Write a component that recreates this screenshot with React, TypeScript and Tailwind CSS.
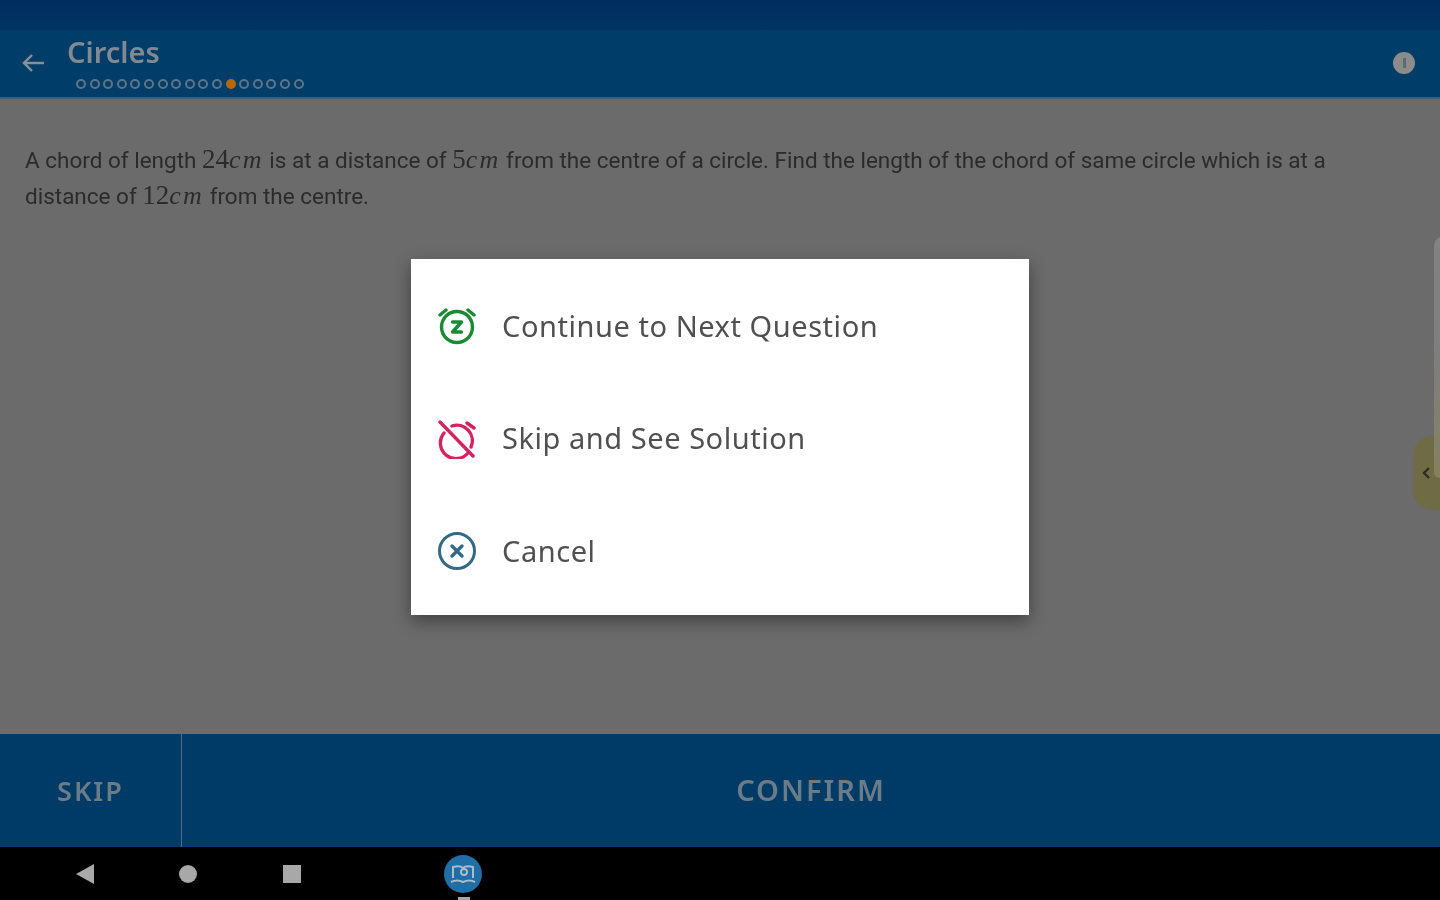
import React from "react";

const dots = Array.from({ length: 17 }, (_, i) => i);

function M({ n, u = "cm" }: { n: string; u?: string }) {
  return (
    <span className="font-['Liberation_Serif',serif] text-[27px] leading-none">
      {n}
      <i className="text-[26px] leading-none tracking-[2.2px]">{u}</i>
    </span>
  );
}

function Row({ icon, label }: { icon: React.ReactNode; label: string }) {
  return (
    <div className="flex h-[112.5px] items-center pl-[26px]">
      <div className="h-[40px] w-[40px] shrink-0 blur-[0.5px]">{icon}</div>
      <span className="ml-[25px] mb-[2px] text-[29px] leading-none tracking-[0.55px] text-[#505050] blur-[0.5px]">{label}</span>
    </div>
  );
}

const Snooze = (
  <svg viewBox="0 0 40 40" className="h-full w-full" fill="none" stroke="#1c8a34" strokeWidth="3.4" strokeLinecap="round" strokeLinejoin="round">
    <circle cx="20" cy="21" r="15.5" />
    <path d="M3 9 9 4M37 9 31 4" />
    <path d="M15.5 16h9l-9 10h9" />
  </svg>
);
const AlarmOff = (
  <svg viewBox="0 0 40 40" className="h-full w-full" fill="none" stroke="#d4245f" strokeWidth="3.4" strokeLinecap="round" strokeLinejoin="round">
    <path d="M7 14a15.5 15.5 0 0 0 24 20M15 7A15.5 15.5 0 0 1 34 28" />
    <path d="M30 4l7 5" />
    <path d="M3 3 36 37" />
  </svg>
);
const CloseCircle = (
  <svg viewBox="0 0 40 40" className="h-full w-full" fill="none" stroke="#346a85" strokeWidth="3" strokeLinecap="round">
    <circle cx="20" cy="20" r="17.5" />
    <path d="M15 15l10 10M25 15l-10 10" strokeWidth="3.4" />
  </svg>
);

export default function App() {
  return (
    <div className="relative flex h-[900px] w-[1440px] flex-col overflow-hidden bg-[#6b6b6b] font-['Noto_Sans',sans-serif]">
      <div className="h-[30px] bg-gradient-to-b from-[#012d60] to-[#013463]" />
      <header className="flex h-[69px] items-start border-b-2 border-[#3f5f75] bg-[#003d69]">
        <svg viewBox="0 0 24 24" className="ml-[21px] mt-[21px] h-[24px] w-[24px] blur-[0.5px]" fill="none" stroke="#8a8f95" strokeWidth="2.4">
          <path d="M23 12H2M11 4l-8 8 8 8" />
        </svg>
        <div className="ml-[22px] flex flex-col">
          <span className="mt-[3px] text-[29px] leading-[38px] font-semibold text-[#7f8a93] blur-[0.6px]">Circles</span>
          <div className="ml-[9px] mt-[8px] flex gap-[3.6px] blur-[0.4px]">
            {dots.map((i) =>
              i === 11 ? (
                <span key={i} className="h-[10px] w-[10px] rounded-full bg-[#b46a0c]" />
              ) : (
                <span key={i} className="h-[10px] w-[10px] rounded-full border-2 border-[#5d7587]" />
              ),
            )}
          </div>
        </div>
        <div className="ml-auto mr-[25px] mt-[22px] flex h-[22px] w-[22px] items-center justify-center rounded-full bg-[#8b8b8b] blur-[0.5px]">
          <span className="h-[10px] w-[3px] bg-[#60696f]" />
        </div>
      </header>
      <main className="relative flex-1 px-[25px] pt-[43px] font-['Roboto',sans-serif] text-[22.5px] leading-[36px] text-[#2b2b2b]">
        <p className="max-w-[1320px] blur-[0.7px]">
          A chord of length <M n="24" /> is at a distance of <M n="5" /> from the centre of a circle. Find the length of the chord of same circle which is at a distance of <M n="12" /> from the centre.
        </p>
      </main>
      <footer className="flex h-[113px] bg-[#003b67] text-[29px] font-semibold text-[#6a7c88]">
        <div className="flex w-[182px] items-center justify-center border-r border-[#4c6f87] pt-[2px]">
          <span className="text-[27px] tracking-[2px] blur-[0.5px]">SKIP</span>
        </div>
        <div className="flex flex-1 items-center justify-center pb-[1px]">
          <span className="tracking-[2px] blur-[0.5px]">CONFIRM</span>
        </div>
      </footer>
      <nav className="relative flex h-[53px] items-center bg-black">
        <svg viewBox="0 0 18 20" className="ml-[76px] h-[20px] w-[18px] blur-[0.5px]" fill="#a8a8a8"><path d="M18 0v20L0 10z" /></svg>
        <span className="ml-[85px] h-[18px] w-[18px] rounded-full bg-[#a8a8a8] blur-[0.5px]" />
        <span className="ml-[86px] h-[18px] w-[18px] bg-[#a8a8a8] blur-[0.5px]" />
        <div className="ml-[143px] flex h-[38px] w-[38px] items-center justify-center rounded-full bg-[#1f6ea6] blur-[0.5px]">
          <svg viewBox="0 0 26 22" className="h-[22px] w-[26px]" fill="none" stroke="#a9bccb" strokeWidth="2">
            <path d="M3 15V4c4-1 8-1 10 1 2-2 6-2 10-1v11M1 19c4-2 8-2 12 0 4-2 8-2 12 0" />
            <circle cx="14" cy="9" r="3" />
          </svg>
        </div>
        <span className="absolute bottom-0 left-[458px] h-[3px] w-[12px] bg-[#a8a8a8]" />
      </nav>

      <div className="absolute left-[1413px] top-[436px] flex h-[74px] w-[40px] items-center rounded-full bg-[#6e6b45] pl-[8px] blur-[0.5px]">
        <svg viewBox="0 0 10 14" className="h-[14px] w-[10px]" fill="none" stroke="#2e2e22" strokeWidth="2.4"><path d="M8 2 3 7l5 5" /></svg>
      </div>
      <div className="absolute left-[1434px] top-[236px] h-[242px] w-[10px] rounded-tl-[10px] rounded-bl-[6px] bg-gradient-to-b from-[#828282] via-[#7e7e7e] to-[#85825c] blur-[0.5px]" />

      <div className="absolute left-[411px] top-[259px] w-[618px] bg-white pt-[11px] pb-[7px] shadow-[0_6px_16px_rgba(0,0,0,0.4)]">
        <Row icon={Snooze} label="Continue to Next Question" />
        <Row icon={AlarmOff} label="Skip and See Solution" />
        <Row icon={CloseCircle} label="Cancel" />
      </div>
    </div>
  );
}
